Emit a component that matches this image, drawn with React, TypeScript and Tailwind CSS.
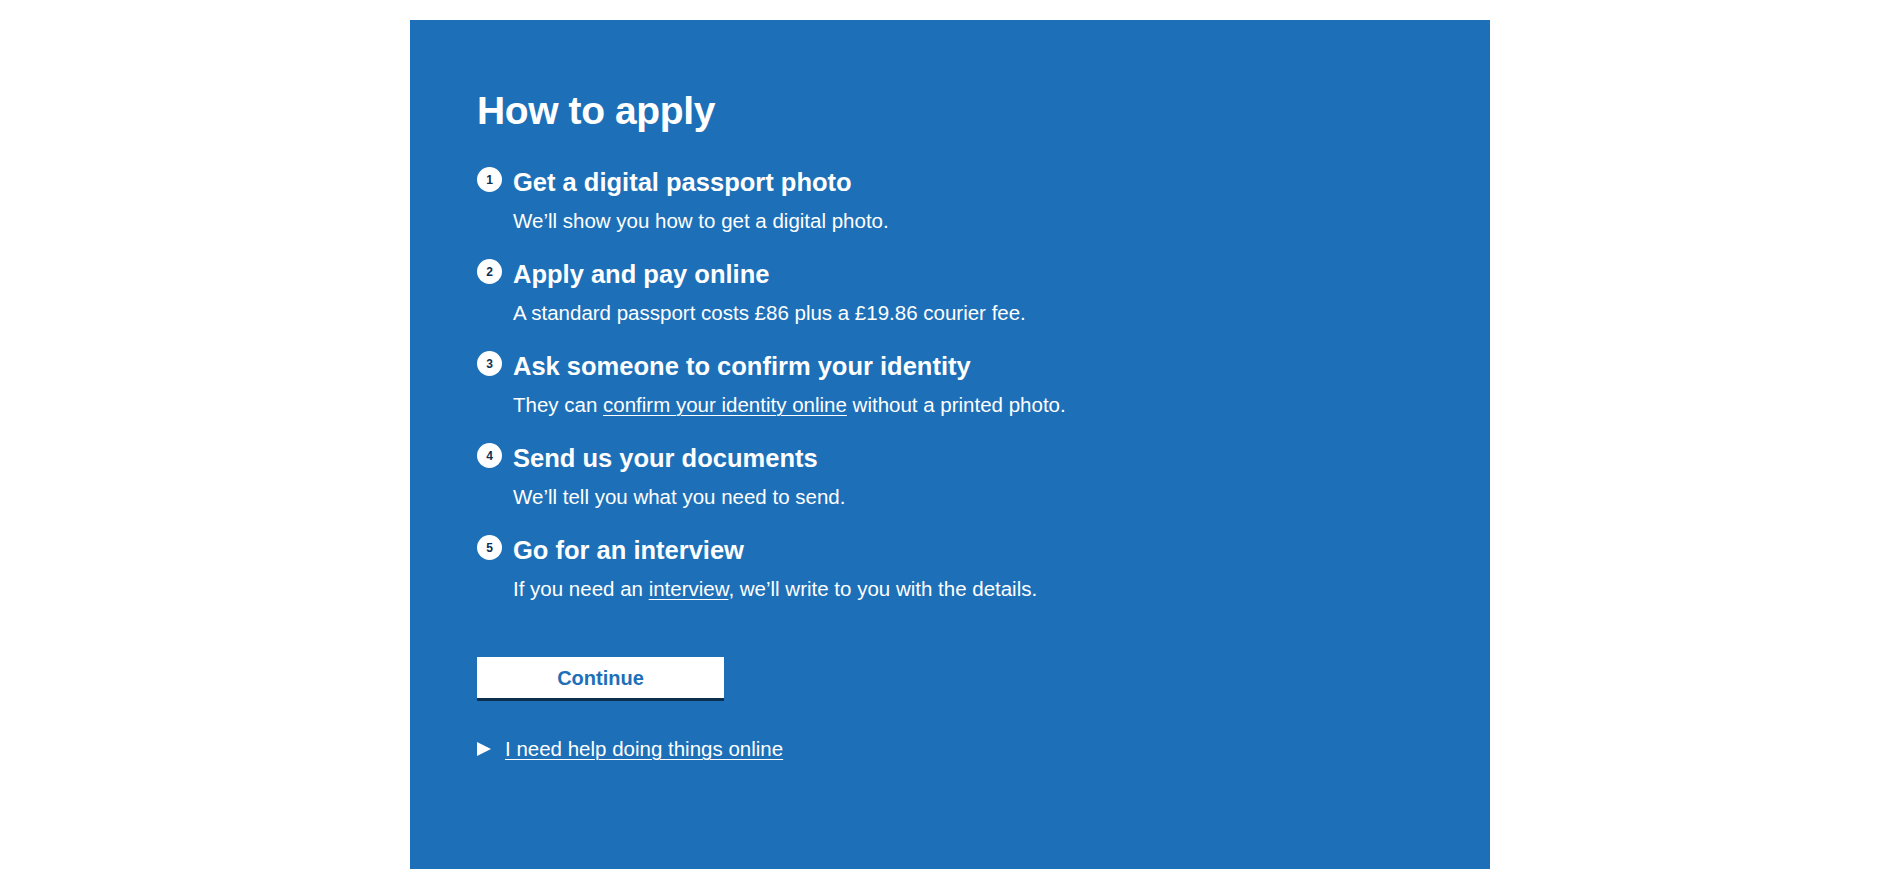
import React from 'react';

const font = { fontFamily: '"Liberation Sans", Arial, sans-serif' };

type Step = { title: string; body: React.ReactNode };

const steps: Step[] = [
  { title: 'Get a digital passport photo', body: 'We’ll show you how to get a digital photo.' },
  { title: 'Apply and pay online', body: 'A standard passport costs £86 plus a £19.86 courier fee.' },
  {
    title: 'Ask someone to confirm your identity',
    body: (
      <>
        They can{' '}
        <a href="#" className="underline underline-offset-[3px] decoration-1">
          confirm your identity online
        </a>{' '}
        without a printed photo.
      </>
    ),
  },
  { title: 'Send us your documents', body: 'We’ll tell you what you need to send.' },
  {
    title: 'Go for an interview',
    body: (
      <>
        If you need an{' '}
        <a href="#" className="underline underline-offset-[3px] decoration-1">
          interview
        </a>
        , we’ll write to you with the details.
      </>
    ),
  },
];

export default function App() {
  return (
    <div className="min-h-[896px] bg-white pt-5 pl-[4px]" style={font}>
      <main className="mx-auto w-[1080px] h-[849px] bg-[#1d70b8] text-white pl-[67px] pt-[68px]">
        {/* heading */}
        <h1 className="text-[39px] leading-[46px] font-bold tracking-[-0.01em]">How to apply</h1>

        {/* steps */}
        <ol className="mt-[33px] flex flex-col gap-[23px]">
          {steps.map((s, i) => (
            <li key={i} className="flex">
              <span className="flex h-[25px] w-[25px] shrink-0 items-center justify-center rounded-full bg-white text-[12px] font-bold text-[#0b2f55]">
                {i + 1}
              </span>
              <div className="ml-[11px]">
                <h2 className="text-[25.5px] leading-[30px] font-bold">{s.title}</h2>
                <p className="mt-[9px] text-[20.5px] leading-[30px]">{s.body}</p>
              </div>
            </li>
          ))}
        </ol>

        {/* button */}
        <button className="mt-[53px] block h-[41px] w-[247px] bg-white text-[20px] font-bold text-[#1d70b8] shadow-[0_3px_0_#0b2f4d]">
          Continue
        </button>

        {/* help */}
        <div className="mt-[37px] flex items-center">
          <span className="h-0 w-0 border-y-[7.5px] border-l-[14px] border-y-transparent border-l-white" />
          <a href="#" className="ml-[14px] text-[20.5px] leading-[28px] underline underline-offset-[3px] decoration-1">
            I need help doing things online
          </a>
        </div>
      </main>
    </div>
  );
}
